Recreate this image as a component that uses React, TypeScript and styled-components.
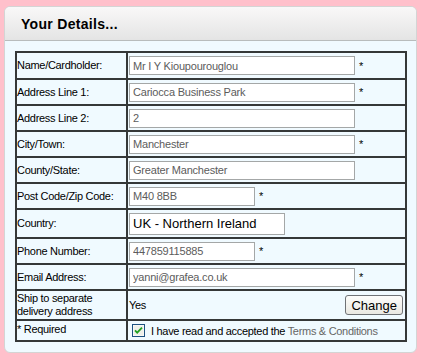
import * as React from "react";
import styled, { createGlobalStyle } from "styled-components";

const Global = createGlobalStyle`
  html, body {
    margin: 0;
    padding: 0;
    background: #ffc0cb;
  }
  body {
    font-family: "Liberation Sans", Arial, sans-serif;
  }
`;

const Page = styled.div`
  padding: 6px 4px 4px 4px;
`;

const Panel = styled.div`
  width: 411px;
  border: 1px solid #d4d4d4;
  border-radius: 6px;
  background: #f0faff;
  overflow: hidden;
`;

const Header = styled.div`
  height: 33px;
  border-bottom: 1px solid #b8bcbc;
  background: linear-gradient(#f9f8f8, #e4e4e4);
  display: flex;
  align-items: center;
  padding-left: 16px;
`;

const Title = styled.h2`
  margin: 0;
  font-family: "Liberation Sans", Arial, sans-serif;
  font-size: 14px;
  font-weight: bold;
  letter-spacing: 0.3px;
  color: #000;
`;

const Body = styled.div`
  padding: 10px 9px 10px 10px;
`;

const Table = styled.table`
  width: 392px;
  border-collapse: collapse;
  font-size: 11px;
  letter-spacing: -0.3px;
  color: #000;
`;

const Row = styled.tr<{ $h: number }>`
  height: ${(p) => p.$h}px;
`;

const Label = styled.td<{ $top?: boolean }>`
  width: 108px;
  border: 2px solid #353838;
  padding: ${(p) => (p.$top ? "2px 1px 0 0" : "0 1px 0 0")};
  vertical-align: ${(p) => (p.$top ? "top" : "middle")};
  line-height: 13px;
`;

const Field = styled.td`
  border: 2px solid #353838;
  padding: 0 0 0 1px;
  vertical-align: middle;
`;

const FieldLine = styled.div<{ $indent?: number }>`
  display: flex;
  align-items: center;
  padding-left: ${(p) => p.$indent ?? 0}px;
`;

const Input = styled.input<{ $w: number }>`
  width: ${(p) => p.$w}px;
  height: 19px;
  box-sizing: border-box;
  border: 1px solid #a4a7a7;
  background: #fff;
  padding: 0 3px;
  font-family: "Liberation Sans", Arial, sans-serif;
  font-size: 11px;
  letter-spacing: -0.2px;
  color: #5c5c5c;
  outline: none;
`;

const BigInput = styled(Input)`
  height: 22px;
  font-size: 13px;
  letter-spacing: 0;
  color: #000;
`;

const Star = styled.span`
  margin-left: 4px;
  font-size: 11px;
`;

const Yes = styled.span`
  flex: 1;
`;

const Button = styled.button`
  height: 20px;
  margin-right: 2px;
  padding: 0 5px;
  border: 1px solid #6f7276;
  border-radius: 3px;
  background: linear-gradient(#fdfdfb, #e9e8e2);
  font-family: "Liberation Sans", Arial, sans-serif;
  font-size: 13px;
  color: #000;
`;

const Agree = styled.span`
  margin-left: 6px;
`;

const Terms = styled.span`
  color: #666;
`;

function Check() {
  return (
    <svg width="13" height="13" viewBox="0 0 13 13">
      <rect x="0.5" y="0.5" width="12" height="12" fill="#fff" stroke="#1c5180" />
      <rect x="1.5" y="1.5" width="10" height="10" fill="#eef0ea" />
      <path d="M3 6.3 L5.2 8.6 L10 3.6" fill="none" stroke="#21a121" strokeWidth="1.8" />
    </svg>
  );
}

interface IField {
  label: string;
  value: string;
  width: number;
  required: boolean;
  h: number;
}

const fields: IField[] = [
  { label: "Name/Cardholder:", value: "Mr I Y Kioupourouglou", width: 226, required: true, h: 27 },
  { label: "Address Line 1:", value: "Cariocca Business Park", width: 226, required: true, h: 26 },
  { label: "Address Line 2:", value: "2", width: 226, required: false, h: 26 },
  { label: "City/Town:", value: "Manchester", width: 226, required: true, h: 26 },
  { label: "County/State:", value: "Greater Manchester", width: 226, required: false, h: 26 },
  { label: "Post Code/Zip Code:", value: "M40 8BB", width: 126, required: true, h: 26 },
];

const fields2: IField[] = [
  { label: "Phone Number:", value: "447859115885", width: 126, required: true, h: 26 },
  { label: "Email Address:", value: "yanni@grafea.co.uk", width: 226, required: true, h: 26 },
];

function FieldRow({ f }: { f: IField }) {
  return (
    <Row $h={f.h}>
      <Label>{f.label}</Label>
      <Field>
        <FieldLine>
          <Input $w={f.width} defaultValue={f.value} />
          {f.required && <Star>*</Star>}
        </FieldLine>
      </Field>
    </Row>
  );
}

export default function App() {
  return (
    <Page>
      <Global />
      <Panel>
        <Header>
          <Title>Your Details...</Title>
        </Header>
        <Body>
          <Table>
            <tbody>
              {fields.map((f) => (
                <FieldRow key={f.label} f={f} />
              ))}
              <Row $h={29}>
                <Label>Country:</Label>
                <Field>
                  <FieldLine>
                    <BigInput $w={156} defaultValue="UK - Northern Ireland" />
                  </FieldLine>
                </Field>
              </Row>
              {fields2.map((f) => (
                <FieldRow key={f.label} f={f} />
              ))}
              <Row $h={30}>
                <Label>
                  Ship to separate
                  <br />
                  delivery address
                </Label>
                <Field>
                  <FieldLine>
                    <Yes>Yes</Yes>
                    <Button>Change</Button>
                  </FieldLine>
                </Field>
              </Row>
              <Row $h={21}>
                <Label $top>* Required</Label>
                <Field>
                  <FieldLine $indent={3}>
                    <Check />
                    <Agree>
                      I have read and accepted the <Terms>Terms &amp; Conditions</Terms>
                    </Agree>
                  </FieldLine>
                </Field>
              </Row>
            </tbody>
          </Table>
        </Body>
      </Panel>
    </Page>
  );
}
